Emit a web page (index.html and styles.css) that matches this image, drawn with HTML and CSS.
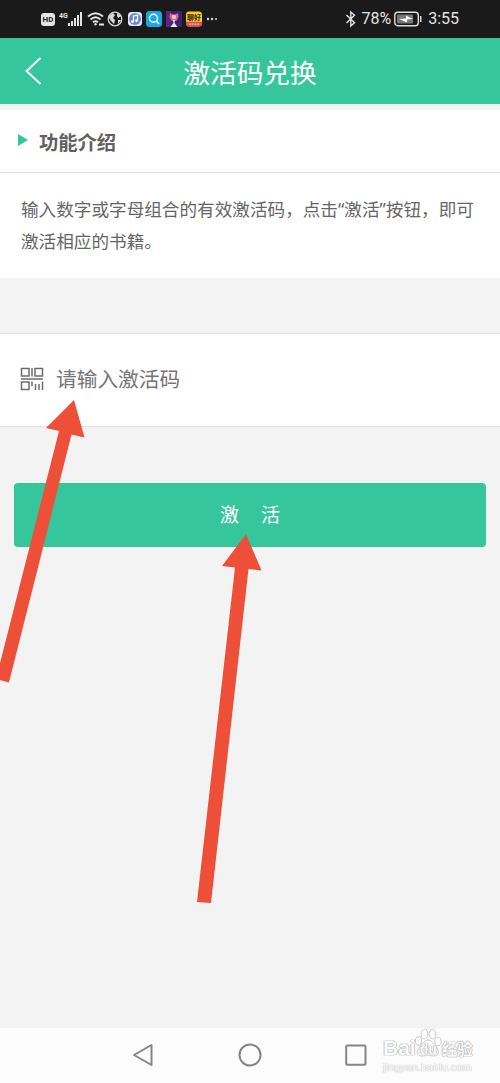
FILE: index.html
```html
<!DOCTYPE html>
<html lang="zh-CN">
<head>
	<meta charset="utf-8">
	<title>激活码兑换</title>
	<link rel="stylesheet" href="styles.css">
</head>
<body>
<div class="screen">
	<div class="status">
		<div class="status_left">
			<span class="hd">HD</span>
			<svg class="signal" width="24" height="18" viewBox="0 0 24 18">
				<text x="0" y="8" class="net">4G</text>
				<path d="M10 13v3M13 11v5M16 8v8M19 5v11M22 2v14" stroke="#e4e4e4" stroke-width="2"/>
			</svg>
			<svg width="18" height="16" viewBox="0 0 18 16" fill="none" stroke="#e4e4e4" stroke-width="1.800">
				<path d="M1 5.500Q8.500-1 16 5.500M3.500 8.500Q8.500 4 13.500 8.500M6 11.200q2.500-2 5 0"/>
				<circle cx="8.500" cy="13.200" r="1.200" fill="#e4e4e4" stroke="none"/>
				<path d="M12 13.500h5" stroke-width="2"/>
			</svg>
			<svg class="globe" width="16" height="16" viewBox="0 0 16 16" fill="none" stroke="#d8d8d8">
				<circle cx="8" cy="8" r="6.800" stroke-width="1.300"/>
				<path d="M2 5l4-3 2 2-2 3 2 2-1 4-3-3-2-3zM10 2l4 3-3 2-1-2zM11 9l3 0-3 4z" fill="#d8d8d8" stroke="none"/>
			</svg>
			<svg class="app music" width="14" height="16" viewBox="0 0 14 16">
				<rect y="1" width="14" height="14" rx="3.500" fill="#e6eaff"/>
				<circle cx="7" cy="8" r="6" fill="#7186d4"/>
				<path d="M5.500 10.500V5l4-.8v5.500" fill="none" stroke="#fff" stroke-width="1.200"/>
				<circle cx="4.600" cy="10.500" r="1.400" fill="#fff"/>
				<circle cx="8.600" cy="9.700" r="1.400" fill="#fff"/>
			</svg>
			<svg class="app" width="16" height="16" viewBox="0 0 16 16">
				<rect width="16" height="16" rx="3.500" fill="#18a9e6"/>
				<circle cx="7.500" cy="7.200" r="4" fill="none" stroke="#fff" stroke-width="1.400"/>
				<path d="M10.400 10.200l2.600 2.800" stroke="#fff" stroke-width="1.500"/>
			</svg>
			<svg class="app" width="16" height="16" viewBox="0 0 16 16">
				<rect width="16" height="16" fill="#3b236f"/>
				<path d="M0 0h5v16H0z" fill="#552787"/>
				<path d="M4 2l3 1.500h2L12 2l.5 4-2 4h-5l-2-4z" fill="#e75b93"/>
				<circle cx="8" cy="6" r="2.200" fill="#f7c3ce"/>
				<path d="M7 9h2l-.5 3 3 4h-7l3-4z" fill="#f2e9ee"/>
			</svg>
			<svg class="app" width="16" height="16" viewBox="0 0 17 16">
				<rect width="17" height="16" rx="3.500" fill="#f8cb25"/>
				<path d="M0 11h17v1.500a3.500 3.500 0 0 1-3.500 3.500h-10A3.500 3.500 0 0 1 0 12.500z" fill="#e64c56"/>
				<text x="1" y="9.500" class="chat">聊好</text>
				<path d="M3 13.500h11" stroke="#ffc9ca" stroke-width="1.300" stroke-dasharray="2 1"/>
			</svg>
			<svg width="12" height="16" viewBox="0 0 12 16" fill="#d8d8d8">
				<circle cx="2" cy="8" r="1.200"/><circle cx="6" cy="8" r="1.200"/><circle cx="10" cy="8" r="1"/>
			</svg>
		</div>
		<div class="status_right">
			<svg width="12" height="18" viewBox="0 0 12 18" fill="none" stroke="#e4e4e4" stroke-width="1.400">
				<path d="M1.500 5l8 7.800L5.800 16V2l3.700 3.200L1.500 13"/>
			</svg>
			<span class="percent">78%</span>
			<svg class="battery" width="28" height="16" viewBox="0 0 28 16">
				<rect x=".8" y="1.300" width="23.500" height="13.400" rx="3" fill="none" stroke="#dedede" stroke-width="1.400"/>
				<rect x="3" y="3.500" width="16" height="9" rx="1" fill="#777"/>
				<path d="M26.700 5v6" stroke="#dedede" stroke-width="1.500"/>
				<path d="M5 8l7-.5V4.500L19 8l-6 .5v3z" fill="#fff"/>
			</svg>
			<span class="time">3:55</span>
		</div>
	</div>
	<div class="header">
		<svg class="back" width="18" height="30" viewBox="0 0 18 30">
			<path d="M15.500 2L1.500 15 15.500 28" fill="none" stroke="#fff" stroke-width="1.900"/>
		</svg>
		<h1>激活码兑换</h1>
	</div>
	<div class="intro">
		<h2><span class="marker"></span>功能介绍</h2>
		<p>输入数字或字母组合的有效激活码，点击“激活”按钮，即可激活相应的书籍。</p>
	</div>
	<div class="code">
		<svg width="24" height="24" viewBox="0 0 24 24" fill="none" stroke="#6c6c6c" stroke-width="1.500">
			<path d="M1.500 1.500h7.500v7.500H1.500zM15 1.500h7.500v7.500H15zM1.500 15h7.500v7.500H1.500zM12 1v8.500M1 12h22M12 14.500v4.500M15.500 17v6M19 17v6M22.500 14.500v8.500"/>
		</svg>
		<span>请输入激活码</span>
	</div>
	<button class="activate"><span>激</span><span>活</span></button>
	<div class="nav">
		<svg width="22" height="26" viewBox="0 0 22 26"><path d="M19.500 3v20L2 13z"/></svg>
		<svg width="26" height="26" viewBox="0 0 26 26"><circle cx="13" cy="13" r="10.500"/></svg>
		<svg width="22" height="26" viewBox="0 0 22 26"><rect x="1.200" y="3.500" width="19.300" height="19.300" rx="1"/></svg>
	</div>
	<div class="watermark">
		<div class="brand">
			<span>Bai</span>
			<span class="paw">
				<svg width="28" height="32" viewBox="0 0 28 32">
					<ellipse cx="4.500" cy="13" rx="3.200" ry="4.200"/>
					<ellipse cx="10.500" cy="6" rx="3.400" ry="4.800"/>
					<ellipse cx="18.500" cy="6" rx="3.400" ry="4.800"/>
					<ellipse cx="24" cy="13.500" rx="3.200" ry="4.200"/>
					<path d="M14 12c4 0 5 4 8 7 4 4 3 9-2 9-3 0-4-1-6-1s-3 1-6 1c-5 0-6-5-2-9 3-3 4-7 8-7z"/>
				</svg>
				<b>du</b>
			</span>
			<span class="jingyan">经验</span>
		</div>
		<div class="site">jingyan.baidu.com</div>
	</div>
	<svg class="arrows" width="500" height="1083" viewBox="0 0 500 1083">
		<path d="M74 400L46 428 59 431-4 679 9 682.500 71.500 434.500 84.500 437.500z"/>
		<path d="M246 534L222 566 235 567.500 197 902 211 903 248.500 569 261.500 570.500z"/>
	</svg>
</div>
</body>
</html>
```
FILE: styles.css
```css
body {
	margin: 0;
	font-family: "Noto Sans", "Noto Sans CJK SC", sans-serif;
}
svg {
	display: block;
	flex: none;
}
h1, h2, p {
	margin: 0;
}
.screen {
	position: relative;
	display: flex;
	flex-direction: column;
	width: 500px;
	height: 1083px;
	overflow: hidden;
	background: #f3f3f3;
}
.status {
	display: flex;
	justify-content: space-between;
	align-items: center;
	box-sizing: border-box;
	height: 38px;
	padding: 0 41px;
	background: #1a1a1a;
	color: #e4e4e4;
}
.status_left, .status_right {
	display: flex;
	align-items: center;
}
.status_left {
	gap: 4px;
}
.hd {
	width: 14px;
	height: 13px;
	border-radius: 3px;
	background: #e4e4e4;
	color: #222;
	font: bold 8px/13px Roboto, sans-serif;
	text-align: center;
}
.signal {
	margin-top: -1px;
}
.net {
	font: bold 7px Roboto, sans-serif;
	fill: #e4e4e4;
}
.globe {
	margin-left: -2px;
}
.music {
	margin-left: 1px;
}
.chat {
	font: bold 7.500px "Noto Sans CJK SC", sans-serif;
	fill: #332500;
}
.percent, .time {
	font: 16px/38px Roboto, sans-serif;
}
.percent {
	margin: 0 3px 0 4px;
}
.time {
	margin-left: 6px;
}
.header {
	display: flex;
	align-items: center;
	height: 66px;
	padding: 0 25px;
	background: #35c79b;
	border-bottom: 6px solid #f1f4f5;
}
.header h1 {
	flex: 1;
	padding: 3px 18px 0 0;
	color: #fff;
	font-size: 26.700px;
	font-weight: 400;
	line-height: 63px;
	text-align: center;
}
.intro {
	height: 168px;
	background: #fff;
}
.intro h2 {
	display: flex;
	align-items: center;
	height: 61px;
	padding: 1px 0 0 18px;
	border-bottom: 1px solid #e0e0e0;
	color: #606060;
	font-size: 19.300px;
	font-weight: 700;
}
.marker {
	margin: 0 11px 3px 0;
	border-left: 10px solid #35c79b;
	border-top: 6px solid transparent;
	border-bottom: 6px solid transparent;
}
.intro p {
	padding: 21px 20px 0 21px;
	color: #666;
	font-size: 17.620px;
	line-height: 31.500px;
}
.code {
	display: flex;
	align-items: center;
	gap: 12px;
	height: 92px;
	margin-top: 55px;
	padding-left: 20px;
	border-top: 1px solid #e0e0e0;
	border-bottom: 1px solid #e0e0e0;
	background: #fff;
	color: #757575;
	font-size: 20.700px;
}
.code svg {
	margin-bottom: 2px;
}
.code span {
	padding-bottom: 5px;
}
.activate {
	display: flex;
	justify-content: center;
	align-items: center;
	gap: 22px;
	height: 64px;
	margin: 56px 14px 0;
	padding: 0 0 3px;
	border: 0;
	border-radius: 4px;
	background: #35c79b;
	color: #fff;
	font: 19px "Noto Sans", "Noto Sans CJK SC", sans-serif;
}
.nav {
	display: flex;
	justify-content: space-between;
	align-items: center;
	box-sizing: border-box;
	height: 55px;
	margin-top: auto;
	padding: 0 133px 1px 132px;
	background: #fcfcfc;
}
.nav svg {
	fill: none;
	stroke: #858585;
	stroke-width: 2;
	stroke-linejoin: round;
}
/* sits over the navigation bar */
.watermark {
	position: absolute;
	left: 383px;
	top: 1029px;
	color: #fff;
	text-shadow: 0 0 1px #999, 0 0 1px #999, 0 0 1px #aaa;
}
.brand {
	display: flex;
	align-items: flex-end;
	height: 31px;
	font: bold 21px/24px "Liberation Sans", sans-serif;
}
.paw {
	position: relative;
	margin-left: -2px;
}
.paw svg {
	fill: #fff;
	stroke: #c8c8c8;
}
.paw b {
	position: absolute;
	left: 6px;
	top: 13px;
	font-size: 14px;
	line-height: 16px;
}
.jingyan {
	font-family: "Noto Sans CJK SC", sans-serif;
	font-size: 15.500px;
	line-height: 24px;
}
.site {
	padding-top: 1px;
	font: 11px/12px "Liberation Sans", sans-serif;
	text-shadow: 0 0 1px #bbb, 0 0 1px #bbb;
}
.arrows {
	position: absolute;
	left: 0;
	top: 0;
	fill: #ed4f38;
	pointer-events: none;
}
```
